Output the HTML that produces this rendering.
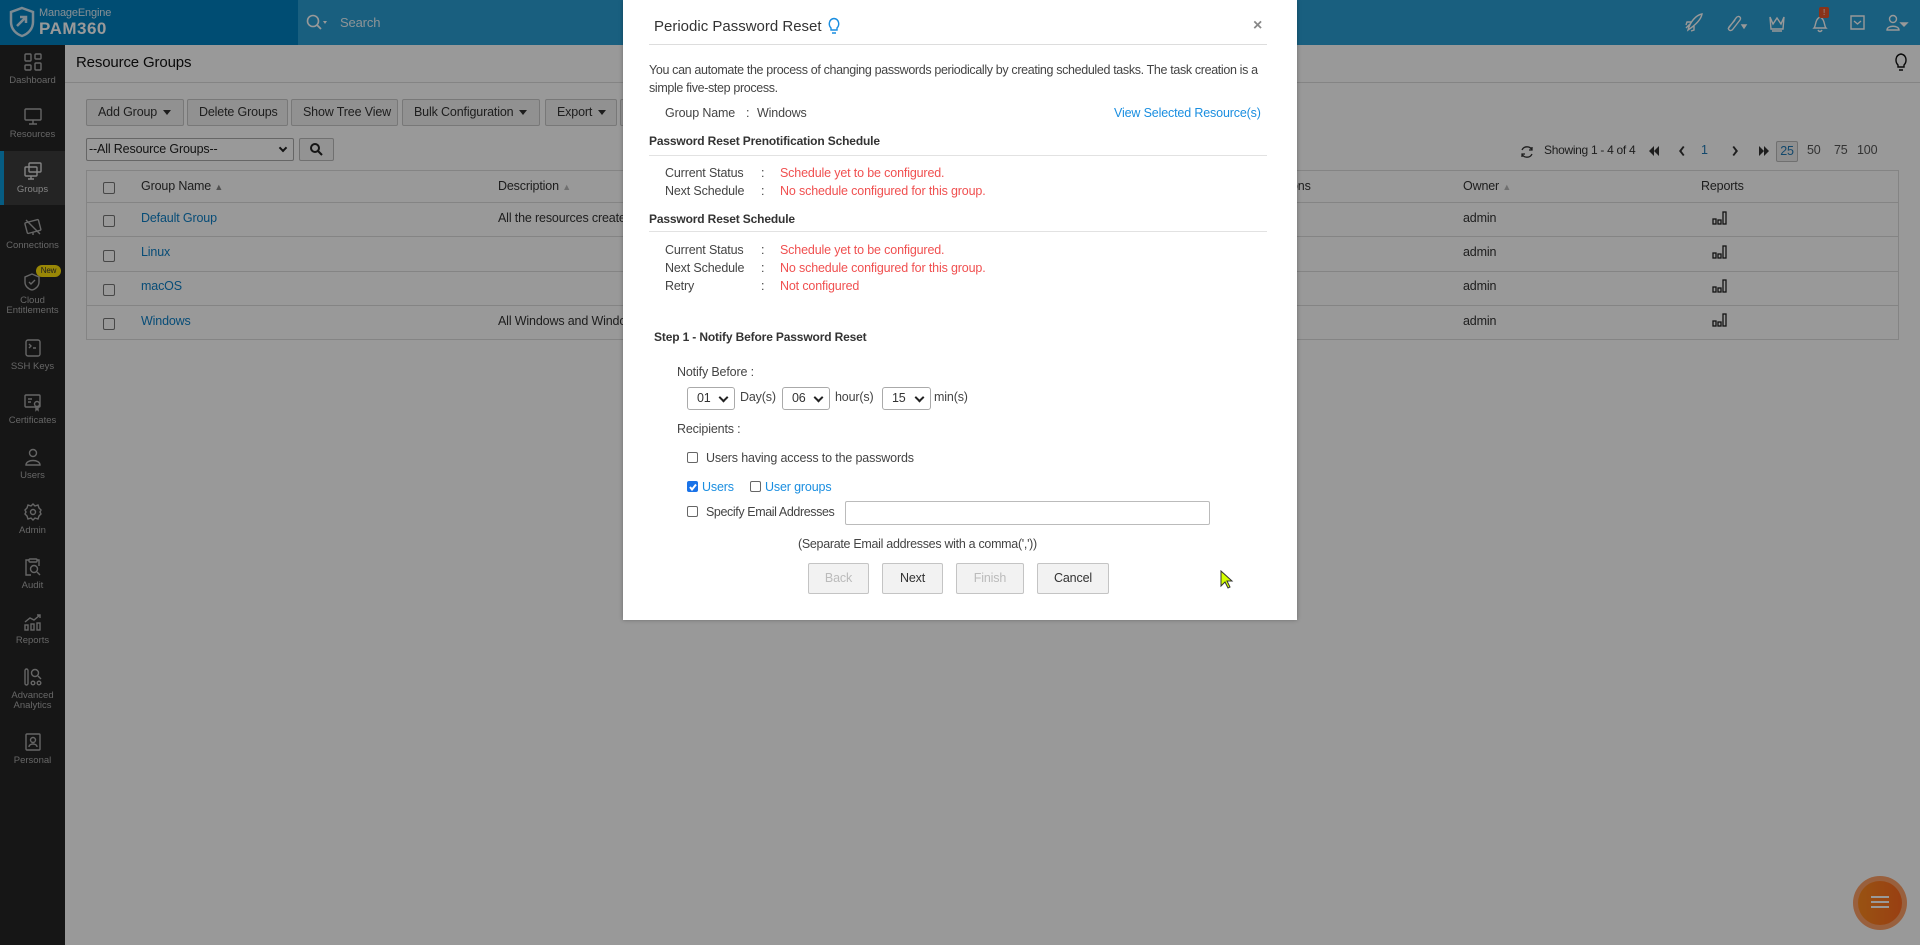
<!DOCTYPE html>
<html><head><meta charset="utf-8">
<style>
*{box-sizing:border-box;margin:0;padding:0}
body{width:1920px;height:945px;overflow:hidden;font-family:"Liberation Sans",sans-serif;font-size:12.5px;color:#333;background:#fff;position:relative;letter-spacing:-0.15px}
.a{position:absolute;white-space:nowrap}
#hdr{position:absolute;left:0;top:0;width:1920px;height:45px;background:#0088c8}
#logo{position:absolute;left:0;top:0;width:298px;height:45px;background:#0080c0}
#srch{position:absolute;left:298px;top:0;width:1622px;height:45px;background:#2a9fd4}
#side{position:absolute;left:0;top:45px;width:65px;height:900px;background:#262626}
.si{position:absolute;left:0;width:65px;text-align:center;color:#aaa;font-size:9.5px;line-height:10px;letter-spacing:0}
.si svg{display:block;margin:0 auto 4px}
.btn{position:absolute;top:99px;height:27px;border:1px solid #c8c8c8;background:#f2f2f2;color:#333;font-size:12.5px;line-height:25px;padding-left:11px;border-radius:2px}
.car{display:inline-block;width:0;height:0;border-left:4px solid transparent;border-right:4px solid transparent;border-top:5px solid #333;margin-left:6px;vertical-align:middle}
.rowl{position:absolute;left:86px;width:1813px;height:1px;background:#ddd}
.cb{position:absolute;width:12px;height:12px;border:1px solid #777;border-radius:2px;background:#fff}
.lnk{color:#0d7fc6}
#ov{position:absolute;left:0;top:0;width:1920px;height:945px;background:rgba(0,0,0,0.4)}
#modal{position:absolute;left:623px;top:0;width:674px;height:620px;background:#fff;box-shadow:0 0 4px rgba(0,0,0,.3)}
.m{position:absolute;white-space:nowrap;font-size:12.5px;color:#444}
.red{color:#f05050}
.sel{position:absolute;top:387px;height:23px;border:1px solid #aaa;border-radius:3px;background:#fff;font-size:12.5px;line-height:21px;padding-left:9px;color:#333}
.sel:after{content:"";position:absolute;right:7px;top:6px;width:5px;height:5px;border-right:2px solid #222;border-bottom:2px solid #222;transform:rotate(45deg)}
.mb{position:absolute;top:563px;height:31px;border:1px solid #c4c4c4;background:#f2f2f2;border-radius:2px;text-align:center;line-height:29px;font-size:12.5px;color:#333}
.mcb{position:absolute;width:11px;height:11px;border:1px solid #666;border-radius:2px;background:#fff}
</style></head><body>
<div id="hdr"></div><div id="logo"></div><div id="srch"></div>
<svg class="a" style="left:9px;top:6px" width="26" height="32" viewBox="0 0 26 32"><path d="M13 2 L24 6 V16 C24 23 19 28 13 30 C7 28 2 23 2 16 V6 Z" fill="none" stroke="#cfe6f3" stroke-width="2.5"/><path d="M8 20 L17 11 M11 11 H17 V17" fill="none" stroke="#cfe6f3" stroke-width="2.5"/></svg>
<div class="a" style="left:39px;top:7px;color:#dfeef7;font-size:11px">ManageEngine</div>
<div class="a" style="left:39px;top:19px;color:#fff;font-size:17px;font-weight:bold;letter-spacing:.5px">PAM360</div>
<svg class="a" style="left:306px;top:14px" width="22" height="17"><circle cx="7" cy="7" r="5.5" fill="none" stroke="#fff" stroke-width="1.6"/><path d="M11 11 L15 15" stroke="#fff" stroke-width="1.8"/><path d="M17 7 L21 7 L19 10Z" fill="#fff"/></svg>
<div class="a" style="left:340px;top:15px;color:#eaf5fb;font-size:13px">Search</div>
<svg class="a" style="left:1682px;top:10px" width="230" height="26" fill="none" stroke="#fff" stroke-width="1.4">
<path d="M4 18 L8 14 M6 20 C8 12 14 5 20 4 C19 10 12 16 6 20Z M9 12 L5 12 L4 15 M12 16 L12 20 L9 21"/>
<path d="M46 19 L54 8 C56 5 60 7 58 10 L51 19 C49 22 45 20 47 17 L53 10"/><path d="M60 15 L64 15 L62 18Z" fill="#fff"/>
<path d="M88 7 L91 14 L95 8 L99 14 L102 7 L101 19 H89 Z M90 21 H100"/>
<path d="M132 18 C134 16 133 9 138 7 C143 9 142 16 144 18 Z M136 20 C137 22 139 22 140 20"/>
<path d="M169 6 H182 V19 H169 Z M172 11 L175.5 14 L179 11"/>
<circle cx="211" cy="9" r="3.5"/><path d="M205 20 C205 15 217 15 217 20 Z"/><path d="M219 13 L225 13 L222 16Z" fill="#fff"/>
</svg>
<div class="a" style="left:1819px;top:7px;width:10px;height:11px;background:#e5562b;border-radius:2px;color:#fff;font-size:8px;text-align:center;line-height:11px">!</div>

<div id="side"></div>
<div class="si" style="top:52px"><svg width="20" height="20" fill="none" stroke="#aaa" stroke-width="1.4"><rect x="2" y="2" width="6" height="7" rx="1"/><rect x="12" y="2" width="6" height="5" rx="1"/><rect x="2" y="13" width="6" height="5" rx="1"/><rect x="12" y="11" width="6" height="7" rx="1"/></svg>Dashboard</div>
<div class="si" style="top:106px"><svg width="20" height="20" fill="none" stroke="#aaa" stroke-width="1.4"><rect x="2" y="3" width="16" height="11" rx="1"/><path d="M10 14 V18 M6 18 H14"/></svg>Resources</div>
<div style="position:absolute;left:0;top:151px;width:65px;height:54px;background:#3d3d3d;border-left:4px solid #0a9ad9"></div>
<div class="si" style="top:161px;color:#ddd"><svg width="20" height="20" fill="none" stroke="#ddd" stroke-width="1.4"><rect x="6" y="2" width="12" height="9" rx="1"/><rect x="2" y="6" width="12" height="9" rx="1"/><path d="M8 15 V18 M5 18 H11"/></svg>Groups</div>
<div class="si" style="top:217px"><svg width="20" height="20" fill="none" stroke="#aaa" stroke-width="1.4"><rect x="3" y="4" width="14" height="11" rx="1" transform="rotate(-15 10 10)"/><path d="M3 3 L17 17 M10 15 V18"/></svg>Connections</div>
<div class="a" style="left:36px;top:265px;width:25px;height:12px;background:#ffe20a;border-radius:6px;font-size:8px;text-align:center;line-height:12px;color:#333">New</div>
<div class="si" style="top:272px"><svg width="20" height="20" fill="none" stroke="#aaa" stroke-width="1.4"><path d="M9 2 L16 5 V10 C16 14 13 17 9 18 C5 17 2 14 2 10 V5 Z"/><path d="M6 10 L8 12 L12 8"/></svg>Cloud<br>Entitlements</div>
<div class="si" style="top:338px"><svg width="20" height="20" fill="none" stroke="#aaa" stroke-width="1.4"><rect x="3" y="2" width="14" height="16" rx="2"/><path d="M6 6 L8 8 L6 10 M10 10 H13"/></svg>SSH Keys</div>
<div class="si" style="top:392px"><svg width="20" height="20" fill="none" stroke="#aaa" stroke-width="1.4"><rect x="2" y="3" width="15" height="12" rx="1"/><path d="M5 7 H9 M5 10 H8"/><circle cx="14" cy="12" r="2.5"/><path d="M13 15 V18 L14 17 L15 18 V15"/></svg>Certificates</div>
<div class="si" style="top:447px"><svg width="20" height="20" fill="none" stroke="#aaa" stroke-width="1.4"><circle cx="10" cy="6" r="3.5"/><path d="M3 18 C3 12 17 12 17 18 Z"/></svg>Users</div>
<div class="si" style="top:502px"><svg width="20" height="20" fill="none" stroke="#aaa" stroke-width="1.4"><circle cx="10" cy="10" r="2.5"/><path d="M10 2 L12 4 L15 3 L16 6 L18 8 L17 10 L18 12 L16 14 L15 17 L12 16 L10 18 L8 16 L5 17 L4 14 L2 12 L3 10 L2 8 L4 6 L5 3 L8 4 Z"/></svg>Admin</div>
<div class="si" style="top:557px"><svg width="20" height="20" fill="none" stroke="#aaa" stroke-width="1.4"><path d="M6 3 H3 V18 H8 M14 3 H16 V9"/><rect x="6" y="2" width="8" height="3" rx="1"/><circle cx="11" cy="12" r="3.5"/><path d="M14 15 L17 18"/></svg>Audit</div>
<div class="si" style="top:612px"><svg width="20" height="20" fill="none" stroke="#aaa" stroke-width="1.4"><rect x="2" y="13" width="3" height="5"/><rect x="8" y="12" width="3" height="6"/><rect x="14" y="11" width="3" height="7"/><path d="M2 10 L7 6 L11 8 L17 3 M14 3 H17 V6"/></svg>Reports</div>
<div class="si" style="top:667px"><svg width="20" height="20" fill="none" stroke="#aaa" stroke-width="1.4"><rect x="2" y="2" width="3" height="16" rx="1.5"/><circle cx="12" cy="6" r="3.5"/><path d="M15 9 L18 12"/><circle cx="10" cy="16" r="1.8"/><circle cx="16" cy="16" r="1.8"/></svg>Advanced<br>Analytics</div>
<div class="si" style="top:732px"><svg width="20" height="20" fill="none" stroke="#aaa" stroke-width="1.4"><rect x="3" y="2" width="14" height="16" rx="1"/><circle cx="10" cy="8" r="2.5"/><path d="M6 15 C6 11 14 11 14 15"/></svg>Personal</div>

<div class="a" style="left:76px;top:54px;font-size:15px;color:#111">Resource Groups</div>
<div class="a" style="left:65px;top:82px;width:1855px;height:1px;background:#ddd"></div>
<svg class="a" style="left:1894px;top:52px" width="14" height="20" fill="none" stroke="#111" stroke-width="1.4"><path d="M4 13 C1 10 1 3 7 2 C13 3 13 10 10 13 V15 H4 Z M5 18 H9"/></svg>

<div class="btn" style="left:86px;width:98px">Add Group<span class="car"></span></div>
<div class="btn" style="left:187px;width:101px">Delete Groups</div>
<div class="btn" style="left:291px;width:107px">Show Tree View</div>
<div class="btn" style="left:402px;width:138px">Bulk Configuration<span class="car"></span></div>
<div class="btn" style="left:545px;width:72px">Export<span class="car"></span></div>
<div class="btn" style="left:620px;width:10px;padding:0"></div>
<div class="a" style="left:86px;top:138px;width:208px;height:23px;border:1px solid #aaa;border-radius:2px;background:#fff;font-size:12.5px;line-height:21px;padding-left:2px;color:#222">--All Resource Groups--</div>
<div class="a" style="left:280px;top:145px;width:6px;height:6px;border-right:2px solid #222;border-bottom:2px solid #222;transform:rotate(45deg)"></div>
<div class="a" style="left:299px;top:138px;width:35px;height:23px;border:1px solid #bbb;border-radius:2px;background:#f5f5f5"></div>
<svg class="a" style="left:309px;top:142px" width="14" height="14" fill="none" stroke="#222" stroke-width="2"><circle cx="6" cy="6" r="4"/><path d="M9 9 L13 13"/></svg>

<svg class="a" style="left:1519px;top:144px" width="16" height="16" fill="none" stroke="#333" stroke-width="1.3"><path d="M13 6 A5.5 5.5 0 0 0 3 6 M3 10 A5.5 5.5 0 0 0 13 10 M13 3 V6 H10 M3 13 V10 H6"/></svg>
<div class="a" style="left:1544px;top:143px;font-size:12px;color:#333;letter-spacing:-0.3px">Showing 1 - 4 of 4</div>
<svg class="a" style="left:1648px;top:145px" width="130" height="12" fill="#333"><path d="M6 1 L1 6 L6 11Z M11 1 L6 6 L11 11Z"/><path d="M35 1 L31 6 L35 11 L36.5 10 L33.5 6 L36.5 2Z"/><path d="M86 1 L90 6 L86 11 L84.5 10 L87.5 6 L84.5 2Z"/><path d="M111 1 L116 6 L111 11Z M116 1 L121 6 L116 11Z"/></svg>
<div class="a" style="left:1701px;top:143px;font-size:12.5px;color:#1f78b4">1</div>
<div class="a" style="left:1776px;top:141px;width:22px;height:21px;border:1px solid #bbb;border-radius:2px;background:#eee;font-size:12.5px;line-height:19px;text-align:center;color:#1f78b4">25</div>
<div class="a" style="left:1807px;top:143px;color:#555">50</div>
<div class="a" style="left:1834px;top:143px;color:#555">75</div>
<div class="a" style="left:1857px;top:143px;color:#555">100</div>

<div class="a" style="left:86px;top:170px;width:1813px;height:170px;border:1px solid #ddd"></div>
<div class="rowl" style="top:202px"></div>
<div class="rowl" style="top:236px"></div>
<div class="rowl" style="top:271px"></div>
<div class="rowl" style="top:305px"></div>
<div class="cb" style="left:103px;top:182px"></div>
<div class="a" style="left:141px;top:179px">Group Name <span style="color:#888;font-size:9px">▲</span></div>
<div class="a" style="left:498px;top:179px">Description <span style="color:#bbb;font-size:9px">▲</span></div>
<div class="a" style="left:1291px;top:179px">ons</div>
<div class="a" style="left:1463px;top:179px">Owner <span style="color:#bbb;font-size:9px">▲</span></div>
<div class="a" style="left:1701px;top:179px">Reports</div>
<div class="cb" style="left:103px;top:215px"></div><div class="a lnk" style="left:141px;top:211px">Default Group</div><div class="a" style="left:498px;top:211px">All the resources create</div>
<div class="cb" style="left:103px;top:250px"></div><div class="a lnk" style="left:141px;top:245px">Linux</div>
<div class="cb" style="left:103px;top:284px"></div><div class="a lnk" style="left:141px;top:279px">macOS</div>
<div class="cb" style="left:103px;top:318px"></div><div class="a lnk" style="left:141px;top:314px">Windows</div><div class="a" style="left:498px;top:314px">All Windows and Windo</div>
<div class="a" style="left:1463px;top:211px">admin</div><div class="a" style="left:1463px;top:245px">admin</div><div class="a" style="left:1463px;top:279px">admin</div><div class="a" style="left:1463px;top:314px">admin</div>
<svg class="a" style="left:1712px;top:210px" width="16" height="120" fill="none" stroke="#222" stroke-width="1.3">
<g><rect x="1" y="9" width="3" height="5"/><rect x="6" y="10" width="3" height="4"/><rect x="11" y="2" width="3" height="12"/></g>
<g transform="translate(0,34)"><rect x="1" y="9" width="3" height="5"/><rect x="6" y="10" width="3" height="4"/><rect x="11" y="2" width="3" height="12"/></g>
<g transform="translate(0,68)"><rect x="1" y="9" width="3" height="5"/><rect x="6" y="10" width="3" height="4"/><rect x="11" y="2" width="3" height="12"/></g>
<g transform="translate(0,102)"><rect x="1" y="9" width="3" height="5"/><rect x="6" y="10" width="3" height="4"/><rect x="11" y="2" width="3" height="12"/></g>
</svg>

<div class="a" style="left:1853px;top:876px;width:54px;height:54px;border-radius:50%;background:#ffa066"></div>
<div class="a" style="left:1858px;top:881px;width:44px;height:44px;border-radius:50%;background:linear-gradient(90deg,#ff8a1e,#ff6a1e)"></div>
<div class="a" style="left:1871px;top:896px;width:18px;height:2px;background:#fff;box-shadow:0 5px 0 #fff,0 10px 0 #fff"></div>

<div id="ov"></div>

<div id="modal">
<div class="m" style="left:31px;top:18px;font-size:15px;color:#333;letter-spacing:0">Periodic Password Reset</div>
<svg class="a" style="left:205px;top:17px" width="12" height="18" fill="none" stroke="#1a8ee0" stroke-width="1.4"><path d="M3 11 C0 8 1 2 6 1.5 C11 2 12 8 9 11 V13 H3 Z M4 16 H8"/></svg>
<div class="m" style="left:630px;top:17px;font-size:16px;color:#888;font-weight:bold">×</div>
<div class="a" style="left:26px;top:44px;width:618px;height:1px;background:#ddd"></div>
<div class="m" style="left:26px;top:61px;line-height:18px;white-space:normal;width:632px;color:#444;letter-spacing:-0.35px">You can automate the process of changing passwords periodically by creating scheduled tasks. The task creation is a simple five-step process.</div>
<div class="m" style="left:42px;top:106px">Group Name</div><div class="m" style="left:123px;top:106px">:</div><div class="m" style="left:134px;top:106px">Windows</div>
<div class="m lnk" style="left:491px;top:106px;color:#1a8ee0">View Selected Resource(s)</div>
<div class="m" style="left:26px;top:134px;font-weight:bold;color:#333;font-size:12px">Password Reset Prenotification Schedule</div>
<div class="a" style="left:26px;top:155px;width:618px;height:1px;background:#e2e2e2"></div>
<div class="m" style="left:42px;top:166px">Current Status</div><div class="m" style="left:138px;top:166px">:</div><div class="m red" style="left:157px;top:166px">Schedule yet to be configured.</div>
<div class="m" style="left:42px;top:184px">Next Schedule</div><div class="m" style="left:138px;top:184px">:</div><div class="m red" style="left:157px;top:184px">No schedule configured for this group.</div>
<div class="m" style="left:26px;top:212px;font-weight:bold;color:#333;font-size:12px">Password Reset Schedule</div>
<div class="a" style="left:26px;top:231px;width:618px;height:1px;background:#e2e2e2"></div>
<div class="m" style="left:42px;top:243px">Current Status</div><div class="m" style="left:138px;top:243px">:</div><div class="m red" style="left:157px;top:243px">Schedule yet to be configured.</div>
<div class="m" style="left:42px;top:261px">Next Schedule</div><div class="m" style="left:138px;top:261px">:</div><div class="m red" style="left:157px;top:261px">No schedule configured for this group.</div>
<div class="m" style="left:42px;top:279px">Retry</div><div class="m" style="left:138px;top:279px">:</div><div class="m red" style="left:157px;top:279px">Not configured</div>
<div class="m" style="left:31px;top:330px;font-weight:bold;color:#333;font-size:12px">Step 1 - Notify Before Password Reset</div>
<div class="m" style="left:54px;top:365px">Notify Before :</div>
<div class="sel" style="left:64px;width:48px">01</div><div class="m" style="left:117px;top:390px">Day(s)</div>
<div class="sel" style="left:159px;width:48px">06</div><div class="m" style="left:212px;top:390px">hour(s)</div>
<div class="sel" style="left:259px;width:49px">15</div><div class="m" style="left:311px;top:390px">min(s)</div>
<div class="m" style="left:54px;top:422px">Recipients :</div>
<div class="mcb" style="left:64px;top:452px"></div><div class="m" style="left:83px;top:451px">Users having access to the passwords</div>
<div class="mcb" style="left:64px;top:481px;background:#1a73e8;border-color:#1a73e8"></div>
<svg class="a" style="left:65px;top:482px" width="10" height="10" fill="none" stroke="#fff" stroke-width="2"><path d="M2 5 L4 7.5 L8 2.5"/></svg>
<div class="m" style="left:79px;top:480px;color:#1a8ee0">Users</div>
<div class="mcb" style="left:127px;top:481px"></div><div class="m" style="left:142px;top:480px;color:#1a8ee0">User groups</div>
<div class="mcb" style="left:64px;top:506px"></div><div class="m" style="left:83px;top:505px;letter-spacing:-0.4px">Specify Email Addresses</div>
<div class="a" style="left:222px;top:501px;width:365px;height:24px;border:1px solid #bbb;border-radius:2px"></div>
<div class="m" style="left:175px;top:537px;letter-spacing:-0.3px">(Separate Email addresses with a comma(','))</div>
<div class="mb" style="left:185px;width:61px;color:#bbb">Back</div>
<div class="mb" style="left:259px;width:61px">Next</div>
<div class="mb" style="left:333px;width:68px;color:#bbb">Finish</div>
<div class="mb" style="left:414px;width:72px">Cancel</div>
</div>
<svg class="a" style="left:1220px;top:570px" width="14" height="20"><path d="M1 1 L1 16 L5 12 L8 18 L10 17 L7 11 L12 11 Z" fill="#d4ff00" stroke="#333" stroke-width="1"/></svg>
</body></html>
